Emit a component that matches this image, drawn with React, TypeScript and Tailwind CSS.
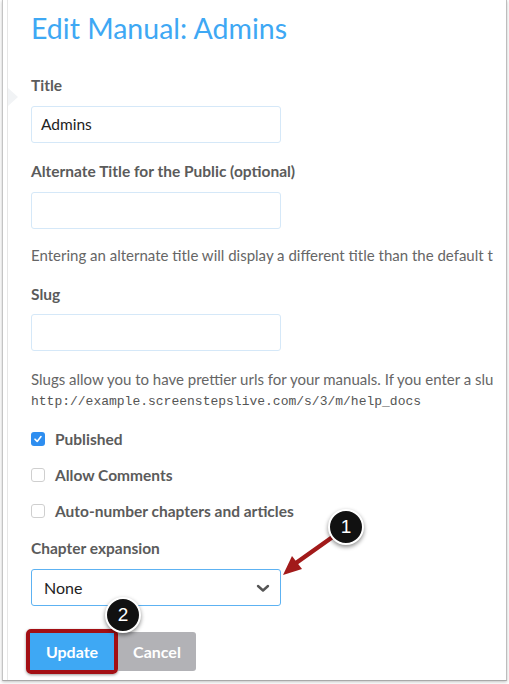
import React from 'react';

const font = { fontFamily: 'Lato, "Noto Sans", sans-serif' };

function Label({ children, className = '' }: any) {
  return <p className={'text-[15.5px] leading-5 font-bold text-[#5b5b5b] ' + className}>{children}</p>;
}

function Field({ value, className = '' }: any) {
  return (
    <div className={'flex h-[37px] w-[250px] items-center rounded-[3px] border border-[#d5e8f8] bg-white px-[9px] text-[15.5px] text-[#222] ' + className}>
      {value}
    </div>
  );
}

function Check({ checked, label, className = '' }: any) {
  return (
    <div className={'flex items-center gap-[10px] ' + className}>
      {checked ? (
        <span className="flex h-[14px] w-[14px] items-center justify-center rounded-[3px] bg-[#2e8ef0]">
          <svg width="10" height="10" viewBox="0 0 10 10">
            <path d="M2 5.2 L4.2 7.4 L8 2.6" fill="none" stroke="white" strokeWidth="1.6" strokeLinecap="round" strokeLinejoin="round" />
          </svg>
        </span>
      ) : (
        <span className="h-[14px] w-[14px] rounded-[3px] border border-[#cfcfcf] bg-white" />
      )}
      <span className="text-[15.5px] leading-5 font-bold text-[#5b5b5b]">{label}</span>
    </div>
  );
}

function Badge({ n, className }: any) {
  return (
    <div className={'absolute flex h-[36px] w-[36px] items-center justify-center rounded-full border-2 border-white bg-[#111] text-[19px] text-white shadow-[0_2px_4px_rgba(0,0,0,0.45)] ' + className}
      style={{ fontFamily: '"Liberation Sans", Arial, sans-serif' }}>
      {n}
    </div>
  );
}

export default function App() {
  return (
    <div className="relative h-[684px] w-[509px] overflow-hidden bg-white" style={font}>
      <div className="ml-[2px] h-[681px] w-[505px] border-r border-b border-l border-r-[#bdbdbd] border-b-[#a8a8a8] border-l-[#c4c4c4] shadow-[0_1px_3px_rgba(0,0,0,0.25)]">
        <div className="relative ml-[4px] h-full overflow-hidden border-l border-[#e6e6e6] pl-[23px]">
          {/* side pointer */}
          <div className="absolute top-[88px] left-0 h-0 w-0 border-y-[9px] border-l-[10px] border-y-transparent border-l-[#f1f3f5]" />

          <h1 className="mt-[11px] text-[28.5px] leading-[34px] text-[#3ea8f4]">Edit Manual: Admins</h1>

          <Label className="mt-[30px]">Title</Label>
          <Field value="Admins" className="mt-[11px]" />

          <Label className="mt-[18px]">Alternate Title for the Public (optional)</Label>
          <Field value="" className="mt-[11px]" />

          <p className="mt-[16px] whitespace-nowrap text-[15px] leading-5 text-[#666]">
            Entering an alternate title will display a different title than the default t
          </p>

          <Label className="mt-[19px]">Slug</Label>
          <Field value="" className="mt-[10px]" />

          <p className="mt-[18px] whitespace-nowrap text-[15px] leading-5 text-[#666]">
            Slugs allow you to have prettier urls for your manuals. If you enter a slu
          </p>
          <p className="mt-[5px] text-[13px] leading-4 text-[#555]" style={{ fontFamily: '"Liberation Mono", monospace' }}>
            http://example.screenstepslive.com/s/3/m/help_docs
          </p>

          <Check checked label="Published" className="mt-[19px]" />
          <Check label="Allow Comments" className="mt-[16px]" />
          <Check label="Auto-number chapters and articles" className="mt-[16px]" />

          <Label className="mt-[17px]">Chapter expansion</Label>
          <div className="mt-[11px] flex h-[37px] w-[250px] items-center justify-between rounded-[3px] border border-[#5db2f2] bg-white pr-[10px] pl-[12px] text-[16px] text-[#222]">
            <span>None</span>
            <svg width="14" height="10" viewBox="0 0 14 10">
              <path d="M2 3 L7 7.5 L12 3" fill="none" stroke="#555" strokeWidth="2.4" strokeLinecap="round" strokeLinejoin="round" />
            </svg>
          </div>

          <div className="mt-[23px] ml-[-5px] flex items-center">
            <div className="rounded-[5px] border-[4px] border-[#a30f14] shadow-[0_1px_3px_rgba(0,0,0,0.4)]">
              <button className="flex h-[37px] w-[84px] items-center justify-center bg-[#3ea8f4] text-[16px] font-bold text-white">Update</button>
            </div>
            <button className="flex h-[39px] w-[78px] items-center justify-center rounded-r-[3px] bg-[#b2b2b6] text-[16px] font-bold text-white">Cancel</button>
          </div>
        </div>
      </div>

      {/* annotations */}
      <svg className="absolute top-0 left-0" width="509" height="684" viewBox="0 0 509 684">
        <line x1="334" y1="536" x2="296" y2="563" stroke="#a21a1a" strokeWidth="4.5" strokeLinecap="round" />
        <polygon points="283,575 292,556 302,569" fill="#a21a1a" />
      </svg>
      <Badge n="1" className="top-[509px] left-[328px]" />
      <Badge n="2" className="top-[597px] left-[105px]" />
    </div>
  );
}
